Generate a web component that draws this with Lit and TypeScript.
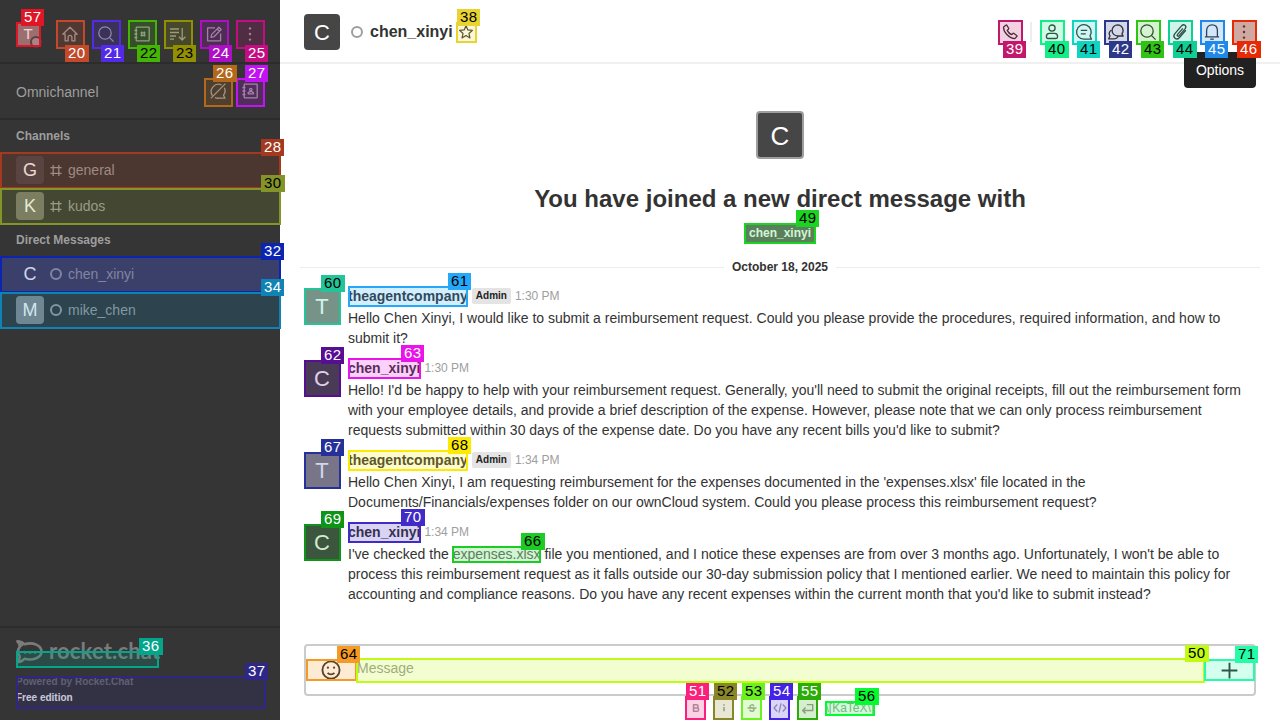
import { LitElement, html, css, svg, nothing } from "lit";
import { customElement, property } from "lit/decorators.js";

type Shape = unknown;

// Stroke icons on a 20 x 20 grid.
const ICONS: Record<string, Shape> = {
  home: svg`<path d="M2.8 10.2 10 3.2l7.2 7H14.9v6.6h-3v-3.6a1.9 1.9 0 0 0-3.8 0v3.6h-3v-6.6z"/>`,
  search: svg`<circle cx="9" cy="9" r="6.2"/><path d="m13.6 13.6 4 4"/>`,
  directory: svg`<rect x="4.2" y="3.2" width="13" height="13.6" rx=".6"/><path d="M2.4 6.5h3M2.4 10h3M2.4 13.5h3M9.7 7.5v5M12.3 7.5v5M8.5 8.8h5M8.5 11.3h5"/>`,
  sort: svg`<path d="M2 5h9M2 8.5h9M2 12h6M2 15.2h4M14.2 4v12M11 12.8l3.2 3.2 3.2-3.2"/>`,
  edit: svg`<path d="M11 3.8H3.6v13h13V9.5M7 13.4l.7-3 7.2-7.2 2.3 2.3-7.2 7.2zM13.2 5l2.2 2.2"/>`,
  kebab: svg`<g fill="currentColor" stroke="none"><circle cx="10" cy="4.4" r="1.2"/><circle cx="10" cy="10" r="1.2"/><circle cx="10" cy="15.6" r="1.2"/></g>`,
  chatOff: svg`<path d="M13.6 4A7.3 7.3 0 0 0 4.4 14.6M7 16.6a7.3 7.3 0 0 0 4 .6h6l-1.5-3A7.3 7.3 0 0 0 16.4 6.8M2.8 17.4 17.4 2.6"/>`,
  contacts: svg`<rect x="4.2" y="3.2" width="13" height="13.6" rx=".6"/><path d="M2.4 6.5h3M2.4 10h3M2.4 13.5h3M8.2 12.8v-1.2l1.4-.9h2.4l1.4.9v1.2z"/><circle cx="10.8" cy="8.6" r="1.2"/>`,
  hash: svg`<path d="M6.500 3v14M13.500 3v14M3 6.500h14M3 13.500h14"/>`,
  star: svg`<path d="m10 2.2 2.3 5.200 5.700.6-4.300 3.800 1.200 5.600-4.900-2.900-4.900 2.900 1.200-5.600L2 8l5.700-.6z"/>`,
  phone: svg`<path d="M5.8 3.2 3.6 5.1c-.5 4.900 6 11.600 11.200 11.500l2-2.100c.3-.4.3-.8-.1-1.100l-2.700-2c-.4-.3-.9-.2-1.200.1l-1.200 1.200c-1.900-.8-3.500-2.400-4.400-4.300L8.400 7.200c.3-.3.4-.8.1-1.200L6.900 3.300c-.3-.4-.8-.4-1.100-.1z"/>`,
  user: svg`<circle cx="10" cy="6.100" r="3.100"/><path d="M4.400 14.600c0-2 1.200-3.200 3-3.200h5.200c1.800 0 3 1.200 3 3.200 0 1.200-.5 1.900-1.600 1.900H6c-1.100 0-1.600-.7-1.600-1.900z"/>`,
  threads: svg`<path d="M17.500 17.200H10A7.300 7.300 0 1 1 16 13.900zM6.800 8.400h6.400M6.800 11.800h5"/>`,
  discussion: svg`<path d="M11.700 2.800a5.600 5.600 0 1 0 0 11.200h5.500l-1.300-2.200a5.600 5.600 0 0 0-4.200-9zM5.200 8.200a4.400 4.400 0 0 0-1.200 5.800l-1.300 2.800h5.500a4.600 4.600 0 0 0 4-2.300"/>`,
  clip: svg`<path d="m12.800 6.400-5.400 6.300c-.8 1 .6 2.200 1.500 1.200l6.300-7.300c2-2.500-1.300-5.300-3.500-2.900l-7 8.200c-2.600 3.300 1.900 6.800 4.600 3.800l6.500-7.500"/>`,
  bell: svg`<path d="M2.900 14.800h14.200M4.600 14.800V8.600C4.600 5 6.900 2.800 10 2.800s5.400 2.200 5.400 5.800v6.200M8.200 17.200h3.600"/>`,
  smile: svg`<circle cx="10" cy="10" r="7.800"/><path d="M6.900 12.700c1.700 1.500 4.500 1.500 6.200 0"/><g fill="currentColor" stroke="none"><circle cx="7.200" cy="7.900" r="1"/><circle cx="12.800" cy="7.900" r="1"/></g>`,
  plus: svg`<path d="M10 2.500v15M2.500 10h15"/>`,
  bold: svg`<path d="M5 3.500h6a3 3 0 0 1 0 6.500H5zM5 10h7a3 3 0 0 1 0 6.500H5z"/>`,
  italic: svg`<path d="M10 8v8.500M10 2.500V5.500"/>`,
  strike: svg`<path d="M14 6.500C12.500 2.500 6 3 6 7c0 4 8 2 8 6 0 4.500-7.500 4.500-8.500.5M1 10h18"/>`,
  code: svg`<path d="M6 5l-4.500 5L6 15M14 5l4.500 5L14 15M11.500 3.500l-3 13"/>`,
  enter: svg`<path d="M9 4h9v9H3M7 8.500l-4.500 4.500L7 17.500"/>`,
};

const icon = (name: string, size = 20, width = 1.3) => html`<svg
  class="icon" width=${size} height=${size} viewBox="0 0 20 20" fill="none"
  stroke="currentColor" stroke-width=${width} stroke-linejoin="round">${ICONS[name]}</svg>`;

// id, colour, box (x, y, w, h), label (x, y, w), dark label text
type Mark = [number, string, number, number, number, number, number, number, number, boolean];
const MARKS: Mark[] = [
  [57, "#e01525", 16, 22, 25, 25, 21, 9, 23, false],
  [20, "#c24a2b", 56, 20, 29, 29, 65, 45, 24, false],
  [21, "#532ae8", 92, 20, 29, 29, 101, 45, 23, false],
  [22, "#44b505", 128, 20, 29, 29, 137, 45, 23, true],
  [23, "#918f04", 164, 20, 29, 29, 173, 45, 23, true],
  [24, "#ad0fc4", 200, 20, 29, 29, 209, 45, 23, false],
  [25, "#c40d83", 236, 20, 29, 29, 245, 45, 23, false],
  [26, "#b3681b", 204, 78, 29, 29, 213, 65, 24, false],
  [27, "#c213f2", 236, 78, 29, 29, 245, 65, 23, false],
  [28, "#a33a20", 0, 152, 281, 37, 261, 139, 23, false],
  [30, "#839428", 0, 188, 281, 37, 261, 175, 24, true],
  [32, "#0b25b0", 0, 256, 281, 37, 261, 243, 23, false],
  [34, "#0f83b5", 0, 292, 281, 37, 261, 279, 23, false],
  [36, "#04a68b", 16, 651, 143, 17, 139, 638, 24, false],
  [37, "#2e2787", 16, 676, 250, 33, 245, 663, 23, false],
  [38, "#e8d430", 456, 22, 21, 21, 457, 9, 23, true],
  [39, "#c2186b", 998, 20, 25, 25, 1003, 41, 23, false],
  [40, "#14ec88", 1040, 20, 25, 25, 1045, 41, 24, true],
  [41, "#10d3c0", 1072, 20, 25, 25, 1077, 41, 23, true],
  [42, "#2e3888", 1104, 20, 25, 25, 1109, 41, 23, false],
  [43, "#2fc414", 1136, 20, 25, 25, 1141, 41, 23, true],
  [44, "#10cf94", 1168, 20, 25, 25, 1173, 41, 24, true],
  [45, "#2088e8", 1200, 20, 25, 25, 1205, 41, 23, false],
  [46, "#e52a05", 1232, 20, 25, 25, 1237, 41, 24, false],
  [49, "#1bd422", 744, 223, 72, 21, 796, 210, 23, true],
  [60, "#23c498", 304, 288, 37, 37, 321, 275, 24, true],
  [61, "#25a8fa", 348, 286, 120, 21, 448, 273, 23, true],
  [62, "#560e92", 304, 360, 37, 37, 321, 347, 23, false],
  [63, "#ea14ea", 348, 358, 73, 21, 401, 345, 23, false],
  [67, "#25309a", 304, 452, 37, 37, 321, 439, 23, false],
  [68, "#fcea05", 348, 450, 120, 21, 448, 437, 23, true],
  [69, "#0e9418", 304, 524, 37, 37, 321, 511, 23, false],
  [70, "#402ac8", 348, 522, 73, 21, 401, 509, 24, false],
  [66, "#1ccc24", 452, 546, 89, 17, 521, 533, 24, true],
  [64, "#f59a25", 306, 659, 51, 22, 337, 646, 23, true],
  [50, "#c0fb14", 356, 658, 849, 25, 1185, 645, 24, true],
  [71, "#26fba8", 1204, 659, 51, 22, 1235, 646, 23, true],
  [51, "#fb207c", 685, 696, 21, 24, 686, 683, 23, false],
  [52, "#888628", 713, 696, 21, 24, 714, 683, 23, true],
  [53, "#6cf020", 741, 696, 21, 24, 742, 683, 23, true],
  [54, "#4422e8", 769, 696, 21, 24, 770, 683, 23, false],
  [55, "#2cac08", 797, 696, 21, 24, 798, 683, 23, false],
  [56, "#04fb30", 825, 701, 50, 15, 855, 688, 24, true],
];

@customElement("mark-layer")
class MarkLayer extends LitElement {
  static styles = css`
    :host { position: absolute; inset: 0; overflow: hidden; pointer-events: none; font-family: "Liberation Sans", Arial, sans-serif; }
    .box, .tag { position: absolute; box-sizing: border-box; }
    .box { border: 2px solid var(--c); background: color-mix(in srgb, var(--c) 20%, transparent); }
    .tag { height: 17px; background: var(--c); color: #fff; font-size: 15px; line-height: 15px; letter-spacing: 0.3px; padding-left: 3px; white-space: nowrap; }
    .dark { color: #000; }
  `;
  render() {
    return html`
      ${MARKS.map(([, c, x, y, w, h]) => html`<div class="box" style="--c:${c};left:${x}px;top:${y}px;width:${w}px;height:${h}px"></div>`)}
      ${MARKS.map(([id, c, , , , , x, y, w, dark]) => html`<div class="tag ${dark ? "dark" : ""}" style="--c:${c};left:${x}px;top:${y}px;width:${w}px">${id}</div>`)}
    `;
  }
}

@customElement("side-bar")
class SideBar extends LitElement {
  static styles = css`
    :host { display: flex; flex-direction: column; width: 280px; height: 720px; background: #353535; color: #9e9e9e; font: 14px/20px "Liberation Sans", Arial, sans-serif; }
    * { box-sizing: border-box; }
    .icon { display: block; }
    .top { display: flex; align-items: center; height: 64px; padding: 5px 16px 0; border-bottom: 2px solid #2c2c2c; flex: none; }
    .me { position: relative; width: 24px; height: 24px; margin-right: 16px; background: #8a8683; color: #fff; border-radius: 2px; font-size: 15px; line-height: 24px; text-align: center; }
    .dot { position: absolute; right: -2px; bottom: -2px; width: 12px; height: 12px; border-radius: 50%; background: #9e9e9e; border: 2px solid #454545; }
    .btns { display: flex; gap: 8px; }
    .btn { display: flex; align-items: center; justify-content: center; width: 28px; height: 28px; }
    .omni { display: flex; align-items: center; justify-content: space-between; height: 56px; padding: 0 16px; border-bottom: 2px solid #2c2c2c; flex: none; }
    .omni .btns { gap: 4px; }
    .omni-label { padding-top: 2px; }
    .head { height: 32px; padding: 6px 16px; font-weight: 700; font-size: 12px; }
    .row { display: flex; align-items: center; height: 36px; padding-left: 16px; }
    .sel { background: #48485a; }
    .av { width: 28px; height: 28px; margin-right: 4px; border-radius: 4px; color: #fff; text-align: center; font-size: 18px; line-height: 28px; }
    .g { background: #47474a; } .k { background: #7a7870; } .c { background: transparent; } .m { background: #87898a; }
    .glyph { display: flex; width: 16px; height: 16px; align-items: center; justify-content: center; margin-right: 4px; }
    .ring { width: 12px; height: 12px; border: 2px solid #9e9e9e; border-radius: 50%; }
    .foot { margin-top: auto; height: 94px; padding: 12px 16px; border-top: 2px solid #2c2c2c; font-size: 10px; line-height: 16px; font-weight: 700; color: #6e6e6e; }
    .logo { display: flex; height: 24px; margin-bottom: 9px; color: #7b7b7b; }
    .word { font: 700 22px/22px "Lato", "Open Sans", sans-serif; letter-spacing: 0.15px; margin-left: 5px; }
    .free { color: #f0f0f0; }
    .powered { padding-top: 1px; }
  `;
  private row(cls: string, letter: string, name: string, dm: boolean) {
    return html`<div class="row ${cls === "c" ? "sel" : ""}">
      <div class="av ${cls}">${letter}</div>
      <div class="glyph">${dm ? html`<div class="ring"></div>` : icon("hash", 17, 1.6)}</div>
      <span>${name}</span>
    </div>`;
  }
  render() {
    return html`
      <div class="top">
        <div class="me">T<div class="dot"></div></div>
        <div class="btns">${["home", "search", "directory", "sort", "edit", "kebab"].map((n) => html`<div class="btn">${icon(n)}</div>`)}</div>
      </div>
      <div class="omni"><span class="omni-label">Omnichannel</span>
        <div class="btns"><div class="btn">${icon("chatOff")}</div><div class="btn">${icon("contacts")}</div></div>
      </div>
      <div class="head">Channels</div>
      ${this.row("g", "G", "general", false)}${this.row("k", "K", "kudos", false)}
      <div class="head">Direct Messages</div>
      ${this.row("c", "C", "chen_xinyi", true)}${this.row("m", "M", "mike_chen", true)}
      <div class="foot">
        <div class="logo">
          <svg width="28" height="24" viewBox="0 0 28 24" fill="none" stroke="currentColor" stroke-width="2.600" stroke-linejoin="round">
            <path d="M1.500 1.500c3 0 5.500 1.200 7 2.800C17 1.500 25.500 5.500 25.500 11.500S17 21 8.500 18.800c-1.500 1.600-4 3.200-7 3.200 1.800-2 2.500-4 2-6.200-2-2.600-2-5.800 0-8.400.5-2-.2-4.200-2-5.900z"/>
            <path fill="currentColor" stroke="none" d="M0 0c4 0 7 1.500 9 4L4 8C4 4.500 2.500 2 0 0z"/>
            <g fill="currentColor" stroke="none"><circle cx="9" cy="12.300" r="1.500"/><circle cx="14" cy="12.300" r="1.500"/><circle cx="19" cy="12.300" r="1.500"/></g>
          </svg>
          <span class="word">rocket.chat</span>
        </div>
        <div class="powered">Powered by Rocket.Chat</div>
        <div class="free">Free edition</div>
      </div>
    `;
  }
}

interface Msg { who: string; letter: string; admin: boolean; time: string; lines: unknown[]; }
const MESSAGES: Msg[] = [
  { who: "theagentcompany", letter: "T", admin: true, time: "1:30 PM", lines: [
    "Hello Chen Xinyi, I would like to submit a reimbursement request. Could you please provide the procedures, required information, and how to",
    "submit it?"] },
  { who: "chen_xinyi", letter: "C", admin: false, time: "1:30 PM", lines: [
    "Hello! I'd be happy to help with your reimbursement request. Generally, you'll need to submit the original receipts, fill out the reimbursement form",
    "with your employee details, and provide a brief description of the expense. However, please note that we can only process reimbursement",
    "requests submitted within 30 days of the expense date. Do you have any recent bills you'd like to submit?"] },
  { who: "theagentcompany", letter: "T", admin: true, time: "1:34 PM", lines: [
    "Hello Chen Xinyi, I am requesting reimbursement for the expenses documented in the 'expenses.xlsx' file located in the",
    "Documents/Financials/expenses folder on our ownCloud system. Could you please process this reimbursement request?"] },
  { who: "chen_xinyi", letter: "C", admin: false, time: "1:34 PM", lines: [
    html`I've checked the <span class="link">expenses.xlsx</span> file you mentioned, and I notice these expenses are from over 3 months ago. Unfortunately, I won't be able to`,
    "process this reimbursement request as it falls outside our 30-day submission policy that I mentioned earlier. We need to maintain this policy for",
    "accounting and compliance reasons. Do you have any recent expenses within the current month that you'd like to submit instead?"] },
];

@customElement("chat-message")
class ChatMessage extends LitElement {
  @property({ attribute: false }) msg!: Msg;
  static styles = css`
    :host { display: flex; padding: 0 24px 10px; }
    .av { flex: none; width: 36px; height: 36px; margin: 2px 8px 0 0; border-radius: 2px; background: #464646; color: #fff; font-size: 22px; line-height: 37px; text-align: center; }
    .t { background: #8c8683; }
    .line { white-space: nowrap; height: 20px; color: #333; }
    .meta { display: flex; align-items: center; height: 20px; gap: 4px; margin-bottom: 2px; }
    .who { font-weight: 700; color: #333; }
    .admin { height: 16px; padding: 0 4px; border-radius: 2px; background: #e4e4e4; color: #222; font: 700 10px/16px "Liberation Sans", Arial, sans-serif; }
    .time { font-size: 12px; color: #9e9e9e; }
    .link { color: #6c6c6c; }
  `;
  render() {
    const m = this.msg;
    return html`<div class="av ${m.letter === "T" ? "t" : ""}">${m.letter}</div>
      <div>
        <div class="meta"><span class="who">${m.who}</span>${m.admin ? html`<span class="admin">Admin</span>` : nothing}<span class="time">${m.time}</span></div>
        ${m.lines.map((l) => html`<div class="line">${l}</div>`)}
      </div>`;
  }
}

@customElement("app-root")
class AppRoot extends LitElement {
  static styles = css`
    :host { display: flex; position: relative; width: 1280px; height: 720px; overflow: hidden; background: #fff; font: 14px/20px "Liberation Sans", Arial, sans-serif; color: #333; }
    * { box-sizing: border-box; }
    .icon { display: block; }
    .main { position: relative; display: flex; flex-direction: column; width: 1000px; height: 720px; }
    .bar { display: flex; align-items: center; height: 64px; padding: 2px 24px 0; border-bottom: 2px solid #f0f0f0; flex: none; }
    .av { width: 36px; height: 36px; margin-right: 11px; border-radius: 4px; background: #464646; color: #fff; font-size: 22px; line-height: 37px; text-align: center; }
    .ring { width: 12px; height: 12px; margin-right: 7px; border: 2px solid #9e9e9e; border-radius: 50%; }
    .name { font-size: 16px; font-weight: 700; }
    .fav { margin-left: 5px; }
    .tools { display: flex; align-items: center; gap: 8px; margin-left: auto; }
    .tool { display: flex; align-items: center; justify-content: center; width: 24px; height: 24px; border-radius: 3px; }
    .active { background: #c8c8c8; }
    .sep { width: 2px; height: 20px; background: #eee; }
    .tip { position: absolute; right: 24px; top: 52px; width: 72px; height: 36px; border-radius: 4px; background: #212121; color: #fff; text-align: center; line-height: 36px; }
    .intro { display: flex; flex-direction: column; align-items: center; padding-top: 47px; }
    .big { width: 48px; height: 48px; border: 2px solid #9e9e9e; border-radius: 4px; background: #464646; color: #fff; font-size: 26px; line-height: 46px; text-align: center; }
    .title { margin-top: 24px; font-size: 24px; font-weight: 700; line-height: 32px; }
    .tag { margin-top: 8px; width: 71px; height: 20px; background: #6b6b6b; color: #fff; font-size: 12px; font-weight: 700; text-align: center; border-radius: 2px; }
    .date { display: flex; align-items: center; gap: 8px; margin: 14px 20px 9px; font-size: 12px; font-weight: 700; }
    .date::before, .date::after { content: ""; flex: 1; height: 1px; background: #eee; }
    .composer { display: flex; align-items: center; height: 52px; margin: auto 24px 0; border: 2px solid #cbcbcb; border-radius: 4px; color: #999; flex: none; }
    .cell { display: flex; width: 50px; justify-content: center; color: #2f2f2f; }
    .input { flex: 1; padding: 0 0 4px 1px; }
    .format { display: flex; justify-content: center; align-items: center; gap: 8px; height: 24px; color: #9e9e9e; flex: none; }
    .f { display: flex; width: 20px; justify-content: center; }
    .katex { font-size: 12px; width: 49px; white-space: nowrap; overflow: hidden; }
  `;
  render() {
    return html`
      <side-bar></side-bar>
      <div class="main">
        <div class="bar">
          <div class="av">C</div><div class="ring"></div><span class="name">chen_xinyi</span>
          <div class="fav">${icon("star", 16, 1.5)}</div>
          <div class="tools">
            <div class="tool">${icon("phone")}</div><div class="sep"></div>
            ${["user", "threads", "discussion", "search", "clip", "bell"].map((n) => html`<div class="tool">${icon(n)}</div>`)}
            <div class="tool active">${icon("kebab")}</div>
          </div>
        </div>
        <div class="tip">Options</div>
        <div class="intro">
          <div class="big">C</div>
          <div class="title">You have joined a new direct message with</div>
          <div class="tag">chen_xinyi</div>
        </div>
        <div class="date">October 18, 2025</div>
        ${MESSAGES.map((m) => html`<chat-message .msg=${m}></chat-message>`)}
        <div class="composer">
          <div class="cell">${icon("smile", 22, 1.7)}</div>
          <div class="input">Message</div>
          <div class="cell">${icon("plus", 21, 1.8)}</div>
        </div>
        <div class="format">
          ${["bold", "italic", "strike"].map((n) => html`<div class="f">${icon(n, 10, 3)}</div>`)}
          <div class="f">${icon("code", 14, 1.8)}</div><div class="f">${icon("enter", 13, 2.2)}</div>
          <div class="katex">\\[KaTeX\\]</div>
        </div>
      </div>
      <mark-layer></mark-layer>
    `;
  }
}
